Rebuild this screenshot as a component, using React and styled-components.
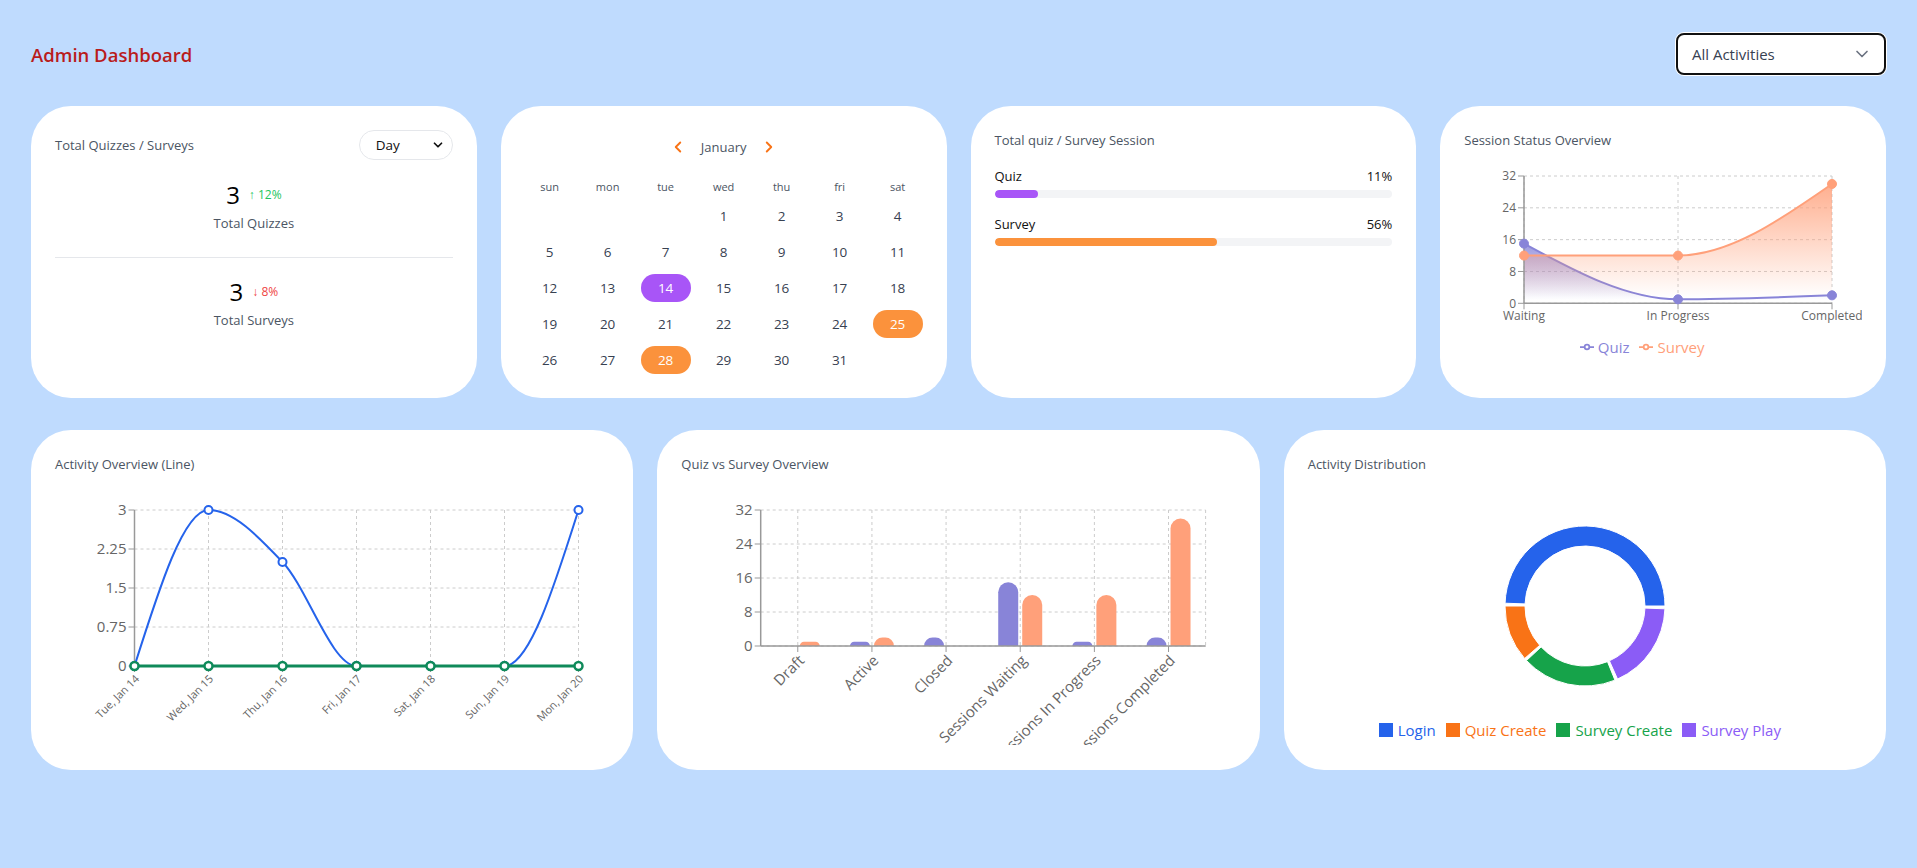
import React from 'react';
import styled, { createGlobalStyle } from 'styled-components';
import { ChevronDown, ChevronLeft, ChevronRight } from 'lucide-react';

const GlobalStyle = createGlobalStyle`
  * { box-sizing: border-box; }
  body {
    margin: 0;
    background: #bfdbfe;
    font-family: "Open Sans", "Noto Sans", sans-serif;
  }
`;

const purple = '#8884d8';
const salmon = '#ffa07a';

// d3 monotoneX, so curves look like the recharts ones
const sign = (x) => (x < 0 ? -1 : 1);
function monotonePath(pts) {
  const n = pts.length;
  const t = new Array(n).fill(0);
  for (let i = 1; i < n - 1; i++) {
    const [x0, y0] = pts[i - 1];
    const [x1, y1] = pts[i];
    const [x2, y2] = pts[i + 1];
    const h0 = x1 - x0;
    const h1 = x2 - x1;
    const s0 = (y1 - y0) / h0;
    const s1 = (y2 - y1) / h1;
    const p = (s0 * h1 + s1 * h0) / (h0 + h1);
    t[i] = (sign(s0) + sign(s1)) * Math.min(Math.abs(s0), Math.abs(s1), 0.5 * Math.abs(p)) || 0;
  }
  const end = (a, b, tt) => {
    const h = b[0] - a[0];
    return h ? (3 * (b[1] - a[1]) / h - tt) / 2 : tt;
  };
  t[0] = end(pts[0], pts[1], t[1]);
  t[n - 1] = end(pts[n - 2], pts[n - 1], t[n - 2]);
  let d = `M${pts[0][0]},${pts[0][1]}`;
  for (let i = 0; i < n - 1; i++) {
    const [x0, y0] = pts[i];
    const [x1, y1] = pts[i + 1];
    const dx = (x1 - x0) / 3;
    d += `C${x0 + dx},${y0 + dx * t[i]},${x1 - dx},${y1 - dx * t[i + 1]},${x1},${y1}`;
  }
  return d;
}

function arcPath(cx, cy, r0, r1, a0, a1) {
  const rad = (a) => (a * Math.PI) / 180;
  const p = (r, a) => [cx + r * Math.cos(rad(a)), cy - r * Math.sin(rad(a))];
  const large = a1 - a0 > 180 ? 1 : 0;
  const [x1, y1] = p(r1, a0);
  const [x2, y2] = p(r1, a1);
  const [x3, y3] = p(r0, a1);
  const [x4, y4] = p(r0, a0);
  return `M${x1},${y1}A${r1},${r1},0,${large},0,${x2},${y2}L${x3},${y3}A${r0},${r0},0,${large},1,${x4},${y4}Z`;
}

function barPath(x, y, w, h, r) {
  const rr = Math.min(r, h, w / 2);
  return `M${x},${y + h}V${y + rr}A${rr},${rr},0,0,1,${x + rr},${y}H${x + w - rr}A${rr},${rr},0,0,1,${x + w},${y + rr}V${y + h}Z`;
}

const Page = styled.div`
  padding: 33px 31px 0;
`;

const Header = styled.header`
  display: flex;
  justify-content: space-between;
  align-items: center;
  height: 42px;
  margin-bottom: 31px;
`;

const PageTitle = styled.h1`
  margin: 0;
  font-size: 18.5px;
  font-weight: 600;
  color: #b91c1c;
`;

const ActivitySelect = styled.div`
  width: 210px;
  height: 42px;
  border: 2px solid #111;
  border-radius: 8px;
  background: #fff;
  box-shadow: 0 0 0 1px #fff;
  display: flex;
  align-items: center;
  justify-content: space-between;
  padding: 0 12px 0 14px;
  font-size: 15px;
  color: #374151;
`;

const Row = styled.div`
  display: grid;
  grid-template-columns: repeat(${(p) => p.cols}, 1fr);
  gap: 24px;
  margin-bottom: 32px;
`;

const Card = styled.div`
  background: #fff;
  border-radius: 40px;
  padding: ${(p) => (p.$tight ? '24px 20px' : '24px')};
  height: ${(p) => p.$h}px;
  overflow: hidden;
`;

const CardTitle = styled.div`
  font-size: 13px;
  line-height: 20px;
  color: #4b5563;
`;

/* card 1 */
const TitleRow = styled.div`
  display: flex;
  justify-content: space-between;
  align-items: center;
  height: 30px;
`;

const PeriodSelect = styled.div`
  width: 94px;
  height: 30px;
  border: 1px solid #e5e7eb;
  border-radius: 15px;
  display: flex;
  align-items: center;
  justify-content: space-between;
  padding: 0 7px 0 16px;
  font-size: 13.5px;
  color: #111;
`;

const Stat = styled.div`
  text-align: center;
  margin-top: ${(p) => p.$mt}px;
`;

const StatValue = styled.div`
  display: flex;
  justify-content: center;
  align-items: center;
  gap: 9px;
  height: 32px;
`;

const BigNumber = styled.span`
  font-size: 24px;
  color: #000;
`;

const Delta = styled.span`
  font-size: 12px;
  color: ${(p) => (p.$up ? '#22c55e' : '#ef4444')};
`;

const StatLabel = styled.div`
  font-size: 13px;
  line-height: 20px;
  margin-top: 3px;
  color: #4b5563;
`;

const Divider = styled.hr`
  border: 0;
  border-top: 1px solid #e5e7eb;
  margin: 24px 0 0;
`;

/* calendar */
const MonthNav = styled.div`
  display: flex;
  justify-content: center;
  align-items: center;
  gap: 14px;
  height: 34px;
  color: #4b5563;
  font-size: 13px;
  svg { color: #f97316; }
`;

const CalGrid = styled.div`
  display: grid;
  grid-template-columns: repeat(7, 58px);
  justify-content: center;
  margin-top: ${(p) => p.$mt || 0}px;
`;

const WeekDay = styled.div`
  text-align: center;
  font-size: 11px;
  line-height: 20px;
  color: #4b5563;
`;

const DayCell = styled.div`
  height: 36px;
  display: flex;
  align-items: center;
  justify-content: center;
`;

const DayPill = styled.span`
  width: 50px;
  height: 28px;
  border-radius: 14px;
  display: flex;
  align-items: center;
  justify-content: center;
  font-size: 13.5px;
  color: ${(p) => (p.$bg ? '#fff' : '#374151')};
  background: ${(p) => p.$bg || 'transparent'};
`;

/* progress */
const ProgressItem = styled.div`
  margin-top: 16px;
`;

const ProgressHead = styled.div`
  display: flex;
  justify-content: space-between;
  font-size: 13px;
  line-height: 20px;
  color: #111;
`;

const Track = styled.div`
  height: 8px;
  margin-top: 4px;
  border-radius: 4px;
  background: #f3f4f6;
  overflow: hidden;
`;

const Fill = styled.div`
  height: 100%;
  border-radius: 4px;
  background: ${(p) => p.$color};
`;

/* charts */
const ChartSvg = styled.svg`
  display: block;
  overflow: hidden;
  margin-top: ${(p) => p.$mt}px;
  font-family: "Open Sans", "Noto Sans", sans-serif;
`;

const Legend = styled.div`
  display: flex;
  justify-content: center;
  gap: 10px;
  margin-top: ${(p) => p.$mt}px;
  padding-right: ${(p) => p.$shift || 0}px;
  font-size: 15px;
  line-height: 24px;
`;

const LegendItem = styled.span`
  display: flex;
  align-items: center;
  gap: ${(p) => p.$gap || 4}px;
  color: ${(p) => p.$color};
`;

const Swatch = styled.span`
  width: 14px;
  height: 14px;
  background: ${(p) => p.$color};
`;

const LineIcon = ({ color }) => (
  <svg width="14" height="14" viewBox="0 0 32 32">
    <path
      strokeWidth="4"
      fill="none"
      stroke={color}
      d="M0,16h10.667A5.333,5.333,0,1,1,21.333,16H32M21.333,16A5.333,5.333,0,1,1,10.667,16"
    />
  </svg>
);

const Grid = ({ left, right, top, bottom, ys, xs }) => (
  <g stroke="#ccc" strokeDasharray="3 3">
    {ys.map((y) => <line key={`h${y}`} x1={left} x2={right} y1={y} y2={y} />)}
    {xs.map((x) => <line key={`v${x}`} x1={x} x2={x} y1={top} y2={bottom} />)}
  </g>
);

const YTicks = ({ x, ticks, size }) => (
  <g>
    {ticks.map(([label, y]) => (
      <g key={label}>
        <line x1={x - 6} x2={x} y1={y} y2={y} stroke="#999" />
        <text x={x - 8} y={y} dy="0.355em" textAnchor="end" fill="#666" fontSize={size}>{label}</text>
      </g>
    ))}
  </g>
);

const sessionData = [
  { name: 'Waiting', quiz: 15, survey: 12 },
  { name: 'In Progress', quiz: 1, survey: 12 },
  { name: 'Completed', quiz: 2, survey: 30 },
];

const SessionChart = () => {
  const L = 60, R = 368, T = 16, B = 143.3;
  const sy = (v) => B - (v / 32) * (B - T);
  const sx = (i) => L + i * ((R - L) / 2);
  const quizPts = sessionData.map((d, i) => [sx(i), sy(d.quiz)]);
  const surveyPts = sessionData.map((d, i) => [sx(i), sy(d.survey)]);
  const area = (pts) => `${monotonePath(pts)}L${R},${B}L${L},${B}Z`;
  return (
    <ChartSvg width="398" height="170" $mt={10}>
      <defs>
        <linearGradient id="gQuiz" x1="0" y1="0" x2="0" y2="1">
          <stop offset="5%" stopColor={purple} stopOpacity="0.8" />
          <stop offset="95%" stopColor={purple} stopOpacity="0" />
        </linearGradient>
        <linearGradient id="gSurvey" x1="0" y1="0" x2="0" y2="1">
          <stop offset="5%" stopColor={salmon} stopOpacity="0.8" />
          <stop offset="95%" stopColor={salmon} stopOpacity="0" />
        </linearGradient>
      </defs>
      <Grid left={L} right={R} top={T} bottom={B} ys={[0, 8, 16, 24, 32].map(sy)} xs={[0, 1, 2].map(sx)} />
      <path d={area(quizPts)} fill="url(#gQuiz)" />
      <path d={monotonePath(quizPts)} fill="none" stroke={purple} strokeWidth="2" />
      <path d={area(surveyPts)} fill="url(#gSurvey)" />
      <path d={monotonePath(surveyPts)} fill="none" stroke={salmon} strokeWidth="2" />
      <line x1={L} x2={L} y1={T} y2={B} stroke="#999" strokeWidth="1.5" />
      <line x1={L} x2={R} y1={B} y2={B} stroke="#999" strokeWidth="1.5" />
      <YTicks x={L} size={12} ticks={[32, 24, 16, 8, 0].map((v) => [v, sy(v)])} />
      {sessionData.map((d, i) => (
        <g key={d.name}>
          <line x1={sx(i)} x2={sx(i)} y1={B} y2={B + 6} stroke="#999" />
          <text x={sx(i)} y={B + 8} dy="0.71em" textAnchor="middle" fill="#666" fontSize="12">{d.name}</text>
        </g>
      ))}
      {quizPts.map(([x, y]) => <circle key={`q${x}`} cx={x} cy={y} r="4.5" fill={purple} stroke={purple} />)}
      {surveyPts.map(([x, y]) => <circle key={`s${x}`} cx={x} cy={y} r="4.5" fill={salmon} stroke={salmon} />)}
    </ChartSvg>
  );
};

const days = ['Tue, Jan 14', 'Wed, Jan 15', 'Thu, Jan 16', 'Fri, Jan 17', 'Sat, Jan 18', 'Sun, Jan 19', 'Mon, Jan 20'];
const logins = [0, 3, 2, 0, 0, 0, 3];
const creates = [0, 0, 0, 0, 0, 0, 0];

const ActivityLineChart = () => {
  const L = 79.5, R = 523.5, T = 20, B = 176;
  const sx = (i) => L + i * ((R - L) / 6);
  const sy = (v) => B - (v / 3) * (B - T);
  const blue = logins.map((v, i) => [sx(i), sy(v)]);
  const green = creates.map((v, i) => [sx(i), sy(v)]);
  const ticks = [['3', sy(3)], ['2.25', sy(2.25)], ['1.5', sy(1.5)], ['0.75', sy(0.75)], ['0', sy(0)]];
  return (
    <ChartSvg width="554" height="250" $mt={16}>
      <Grid left={L} right={R} top={T} bottom={B} ys={ticks.map((t) => t[1])} xs={days.map((_, i) => sx(i))} />
      <line x1={L} x2={L} y1={T} y2={B} stroke="#999" strokeWidth="1.5" />
      <line x1={L} x2={R} y1={B} y2={B} stroke="#999" strokeWidth="1.5" />
      <YTicks x={L} size={15} ticks={ticks} />
      {days.map((d, i) => (
        <g key={d}>
          <line x1={sx(i)} x2={sx(i)} y1={B} y2={B + 6} stroke="#999" />
          <text x={sx(i)} y={B + 8} dy="0.71em" textAnchor="end" fill="#666" fontSize="11" transform={`rotate(-45, ${sx(i)}, ${B + 8})`}>{d}</text>
        </g>
      ))}
      <path d={monotonePath(blue)} fill="none" stroke="#2563eb" strokeWidth="2" />
      {blue.map(([x, y]) => <circle key={`b${x}`} cx={x} cy={y} r="4" fill="#fff" stroke="#2563eb" strokeWidth="2" />)}
      <path d={monotonePath(green)} fill="none" stroke="#0f8a5a" strokeWidth="3" />
      {green.map(([x, y]) => <circle key={`g${x}`} cx={x} cy={y} r="4" fill="#fff" stroke="#0f8a5a" strokeWidth="2.5" />)}
    </ChartSvg>
  );
};

const barData = [
  { name: 'Draft', quiz: 0, survey: 1 },
  { name: 'Active', quiz: 1, survey: 2 },
  { name: 'Closed', quiz: 2, survey: 0 },
  { name: 'Sessions Waiting', quiz: 15, survey: 12 },
  { name: 'Sessions In Progress', quiz: 1, survey: 12 },
  { name: 'Sessions Completed', quiz: 2, survey: 30 },
];

const QuizSurveyBarChart = () => {
  const L = 79.7, R = 524.6, T = 20, B = 156;
  const band = (R - L) / barData.length;
  const cx = (i) => L + band * (i + 0.5);
  const sy = (v) => B - (v / 32) * (B - T);
  return (
    <ChartSvg width="553" height="255" $mt={16}>
      <Grid left={L} right={R} top={T} bottom={B} ys={[0, 8, 16, 24, 32].map(sy)} xs={[...barData.map((_, i) => cx(i)), R]} />
      {barData.map((d, i) => (
        <g key={d.name}>
          {d.quiz > 0 && <path d={barPath(cx(i) - 22, sy(d.quiz), 20, B - sy(d.quiz), 10)} fill={purple} />}
          {d.survey > 0 && <path d={barPath(cx(i) + 2, sy(d.survey), 20, B - sy(d.survey), 10)} fill={salmon} />}
        </g>
      ))}
      <line x1={L} x2={L} y1={T} y2={B} stroke="#999" strokeWidth="1.5" />
      <line x1={L} x2={R} y1={B} y2={B} stroke="#999" strokeWidth="1.5" />
      <YTicks x={L} size={15} ticks={[32, 24, 16, 8, 0].map((v) => [v, sy(v)])} />
      {barData.map((d, i) => (
        <g key={d.name}>
          <line x1={cx(i)} x2={cx(i)} y1={B} y2={B + 6} stroke="#999" />
          <text x={cx(i)} y={B + 8} dy="0.71em" textAnchor="end" fill="#666" fontSize="15" transform={`rotate(-45, ${cx(i)}, ${B + 8})`}>{d.name}</text>
        </g>
      ))}
    </ChartSvg>
  );
};

const slices = [
  { name: 'Login', color: '#2563eb', from: 0, to: 178 },
  { name: 'Quiz Create', color: '#f97316', from: 180, to: 221 },
  { name: 'Survey Create', color: '#16a34a', from: 223, to: 292 },
  { name: 'Survey Play', color: '#8b5cf6', from: 294, to: 358 },
];

const DonutChart = () => (
  <ChartSvg width="554" height="220" $mt={16}>
    {slices.map((s) => (
      <path key={s.name} d={arcPath(277, 116, 60, 80, s.from, s.to)} fill={s.color} stroke="#fff" strokeWidth="1" />
    ))}
  </ChartSvg>
);

const calendarCells = [...Array(3).fill(null), ...Array.from({ length: 31 }, (_, i) => i + 1)];
const highlight = { 14: '#a855f7', 25: '#fb923c', 28: '#fb923c' };

const App = () => (
  <Page>
    <GlobalStyle />
    <Header>
      <PageTitle>Admin Dashboard</PageTitle>
      <ActivitySelect>
        All Activities
        <ChevronDown size={20} color="#6b7280" />
      </ActivitySelect>
    </Header>

    <Row cols={4}>
      <Card $h={292}>
        <TitleRow>
          <CardTitle>Total Quizzes / Surveys</CardTitle>
          <PeriodSelect>
            Day
            <ChevronDown size={14} strokeWidth={3} color="#111" />
          </PeriodSelect>
        </TitleRow>
        <Stat $mt={18}>
          <StatValue>
            <BigNumber>3</BigNumber>
            <Delta $up>↑ 12%</Delta>
          </StatValue>
          <StatLabel>Total Quizzes</StatLabel>
        </Stat>
        <Divider />
        <Stat $mt={17}>
          <StatValue>
            <BigNumber>3</BigNumber>
            <Delta>↓ 8%</Delta>
          </StatValue>
          <StatLabel>Total Surveys</StatLabel>
        </Stat>
      </Card>

      <Card $h={292} $tight>
        <MonthNav>
          <ChevronLeft size={18} strokeWidth={2.5} />
          January
          <ChevronRight size={18} strokeWidth={2.5} />
        </MonthNav>
        <CalGrid $mt={13}>
          {['sun', 'mon', 'tue', 'wed', 'thu', 'fri', 'sat'].map((d) => <WeekDay key={d}>{d}</WeekDay>)}
        </CalGrid>
        <CalGrid $mt={1}>
          {calendarCells.map((d, i) => (
            <DayCell key={i}>
              {d && <DayPill $bg={highlight[d]}>{d}</DayPill>}
            </DayCell>
          ))}
        </CalGrid>
      </Card>

      <Card $h={292}>
        <CardTitle>Total quiz / Survey Session</CardTitle>
        <ProgressItem>
          <ProgressHead><span>Quiz</span><span>11%</span></ProgressHead>
          <Track><Fill $color="#a855f7" style={{ width: '11%' }} /></Track>
        </ProgressItem>
        <ProgressItem>
          <ProgressHead><span>Survey</span><span>56%</span></ProgressHead>
          <Track><Fill $color="#fb923c" style={{ width: '56%' }} /></Track>
        </ProgressItem>
      </Card>

      <Card $h={292}>
        <CardTitle>Session Status Overview</CardTitle>
        <SessionChart />
        <Legend $mt={5} $shift={42}>
          <LegendItem $color={purple}><LineIcon color={purple} />Quiz</LegendItem>
          <LegendItem $color={salmon}><LineIcon color={salmon} />Survey</LegendItem>
        </Legend>
      </Card>
    </Row>

    <Row cols={3}>
      <Card $h={340}>
        <CardTitle>Activity Overview (Line)</CardTitle>
        <ActivityLineChart />
      </Card>
      <Card $h={340}>
        <CardTitle>Quiz vs Survey Overview</CardTitle>
        <QuizSurveyBarChart />
      </Card>
      <Card $h={340}>
        <CardTitle>Activity Distribution</CardTitle>
        <DonutChart />
        <Legend $mt={8} $shift={10}>
          {slices.map((s) => (
            <LegendItem key={s.name} $color={s.color} $gap={5}>
              <Swatch $color={s.color} />
              {s.name}
            </LegendItem>
          ))}
        </Legend>
      </Card>
    </Row>
  </Page>
);

export default App;
